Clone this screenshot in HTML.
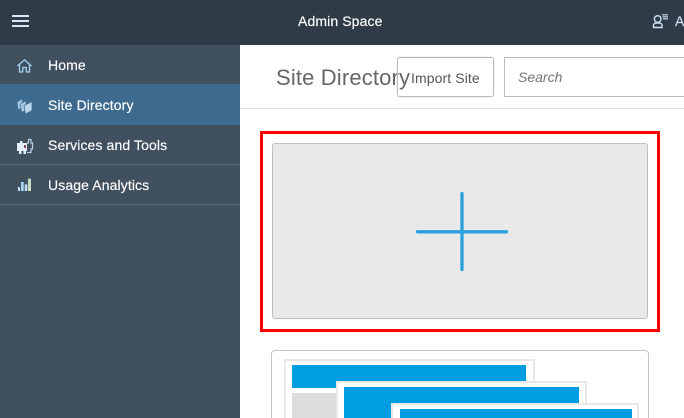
<!DOCTYPE html>
<html>
<head>
<meta charset="utf-8">
<style>
html,body{margin:0;padding:0;width:684px;height:418px;overflow:hidden;background:#fff;font-family:"Liberation Sans",Arial,sans-serif}
#w{position:relative;width:684px;height:418px;overflow:hidden;background:#fff}
.a{position:absolute;box-sizing:border-box}
.t{position:absolute;white-space:nowrap;line-height:20px}
.n{font-size:14px;color:#fff;letter-spacing:.11px;-webkit-text-stroke:.15px #fff}
svg{position:absolute;overflow:visible}
</style>
</head>
<body>
<div id="w">
<div class="a" style="left:0;top:0;width:684px;height:45px;background:#2f3c48"></div>
<div class="a" style="left:12px;top:15px;width:17px;height:2px;background:#d5e6f5"></div>
<div class="a" style="left:12px;top:20px;width:17px;height:2px;background:#d5e6f5"></div>
<div class="a" style="left:12px;top:25px;width:17px;height:2px;background:#d5e6f5"></div>
<div class="t n" style="left:298px;top:11px">Admin Space</div>
<svg style="left:652px;top:14px" width="16" height="16" viewBox="0 0 16 16" fill="none" stroke="#cfe2f3" stroke-width="1.4"><circle cx="5.700" cy="5" r="3.300"/><path d="M1.500 13.500V11.500Q1.500 9.500 3.800 9H7.600Q10 9.500 10 11.500V13.500Z"/><path d="M10 .8H16M10.500 2.800H16M11 4.800H16" stroke-width="1.100"/></svg>
<div class="t n" style="left:675px;top:11px;color:#cfe2f3;-webkit-text-stroke:.15px #cfe2f3">A</div>

<div class="a" style="left:0;top:45px;width:240px;height:373px;background:#40505f"></div>
<div class="a" style="left:0;top:84px;width:240px;height:41px;background:#3f6a8f"></div>
<div class="a" style="left:0;top:164px;width:240px;height:1px;background:#4d6a80"></div>
<div class="a" style="left:0;top:204px;width:240px;height:1px;background:#4d6a80"></div>
<div class="t n" style="left:48px;top:55px">Home</div>
<div class="t n" style="left:48px;top:95px">Site Directory</div>
<div class="t n" style="left:48px;top:135px">Services and Tools</div>
<div class="t n" style="left:48px;top:175px">Usage Analytics</div>

<svg style="left:17px;top:59px" width="15" height="14" viewBox="0 0 15 14" fill="none" stroke="#a5d0f0" stroke-width="1.300"><path d="M.5 7L7.500 .9L14.500 7M2.500 5.500V13H5.700V8.500H9.300V13H12.500V5.500"/></svg>
<svg style="left:17px;top:98px" width="15" height="16" viewBox="0 0 15 16" stroke="#3f6a8f" stroke-width=".7"><path d="M0 4L5.500 0.500V9.500L1 12Z" fill="#9fc3e0"/><path d="M3.500 6L9 2.500V12L4.500 14.500Z" fill="#a9cbe6"/><path d="M7 7.500L15 3.500V12.500L8.500 16Z" fill="#bcd7ec"/></svg>
<svg style="left:16px;top:138px" width="17" height="16" viewBox="0 0 17 16"><path d="M1 5H11V13H1Z" fill="#e3effa"/><path d="M3 13H5.500V16H3ZM7.500 13H10V16H7.500ZM4 3H6.500V5H4Z" fill="#e3effa"/><path d="M8 7H10V10H8Z" fill="#8c4a5a"/><path d="M11 5H12.500V1.500H15V5H16.500V11H15V14.500H11" fill="none" stroke="#b8d3ea" stroke-width="1.200"/></svg>
<svg style="left:18px;top:178px" width="13" height="13" viewBox="0 0 13 13"><path d="M0 9H2V13H0Z" fill="#bfe0f8"/><path d="M3 4H5.700V13H3Z" fill="#a9d4f5"/><path d="M6.700 6.300H9.300V13H6.700Z" fill="#bfe0f8"/><path d="M10 .7H13V13H10Z" fill="#c9dcc4"/></svg>

<div class="t" style="left:276px;top:66px;font-size:22px;line-height:24px;color:#666;letter-spacing:.15px">Site Directory</div>
<div class="a" style="left:397px;top:57px;width:97px;height:40px;border:1px solid #bbb;border-radius:3px;box-shadow:0 0 1px #bbb"></div>
<div class="t" style="left:411px;top:68px;font-size:14px;color:#555;letter-spacing:.1px">Import Site</div>
<div class="a" style="left:504px;top:57px;width:190px;height:40px;border:1px solid #bbb"></div>
<div class="t" style="left:518px;top:67px;font-size:14px;font-style:italic;color:#777">Search</div>
<div class="a" style="left:240px;top:108px;width:444px;height:1px;background:#e0e0e0"></div>

<div class="a" style="left:260px;top:131px;width:400px;height:201px;border:3px solid #f00"></div>
<div class="a" style="left:272px;top:143px;width:376px;height:176px;background:#e9e9e9;border:1px solid #bfbfbf;border-radius:3px"></div>
<svg style="left:0;top:0" width="684" height="418"><path d="M417.500 231.800H506.500M462 193.500V269.500" stroke="#2aa0dc" stroke-width="3.300" stroke-linecap="round" fill="none"/></svg>

<div class="a" style="left:271px;top:350px;width:378px;height:80px;border:1px solid #c4c4c4;border-radius:4px"></div>
<div class="a" style="left:284px;top:359px;width:251px;height:70px;background:#fff;border:2px solid #e8e8e8"></div>
<div class="a" style="left:292px;top:365px;width:234px;height:23px;background:#009de0"></div>
<div class="a" style="left:292px;top:393px;width:50px;height:30px;background:#dcdcdc"></div>
<div class="a" style="left:336px;top:381px;width:251px;height:50px;background:#fff;border:2px solid #e8e8e8"></div>
<div class="a" style="left:344px;top:387px;width:235px;height:40px;background:#009de0"></div>
<div class="a" style="left:391px;top:403px;width:248px;height:30px;background:#fff;border:2px solid #e8e8e8"></div>
<div class="a" style="left:400px;top:409px;width:232px;height:20px;background:#009de0"></div>
</div>
</body>
</html>
